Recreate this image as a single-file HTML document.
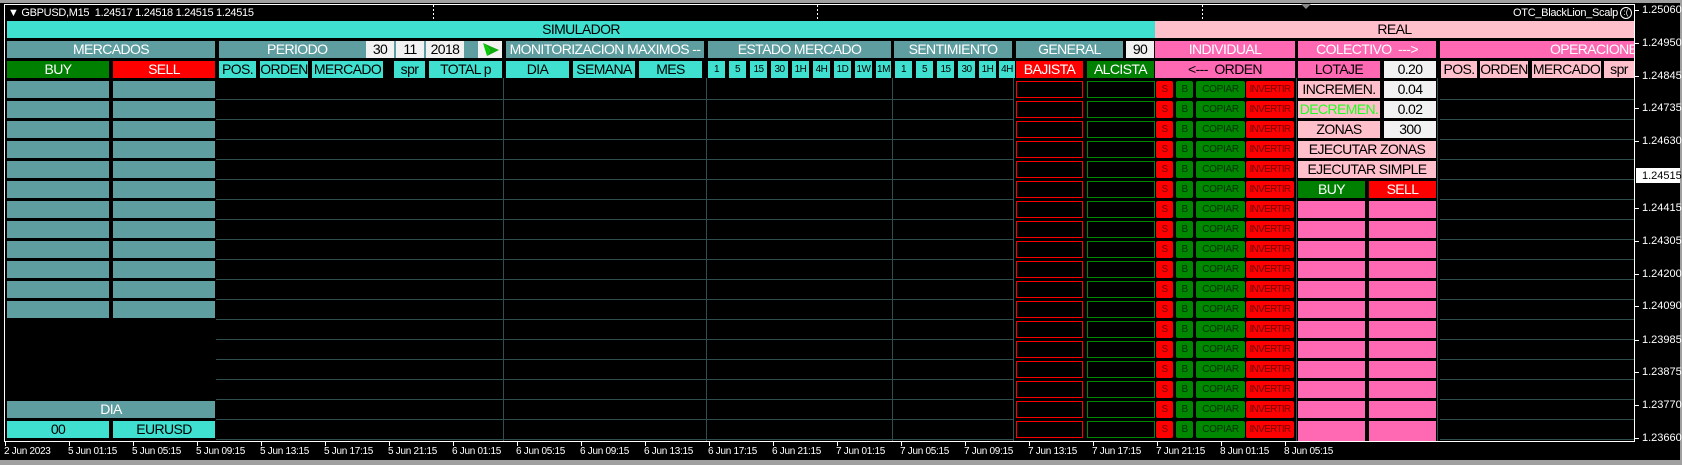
<!DOCTYPE html>
<html><head><meta charset="utf-8"><style>
*{margin:0;padding:0;box-sizing:border-box}
body{width:1682px;height:465px;background:#000;position:relative;overflow:hidden;font-family:"Liberation Sans",Arial,sans-serif}
div{position:absolute}
.b{height:17px;line-height:17px;text-align:center;font-size:14px;white-space:nowrap;overflow:hidden;letter-spacing:-0.6px}
.cb{background:#5f9ea0;color:#fff}
.tq{background:#40e0d0;color:#000}
.gn{background:#008000;color:#fff}
.rd{background:#ff0000;color:#fff}
.pk{background:#ffc0cb;color:#000}
.hp{background:#ff69b4;color:#fff}
.wh{background:#f2f2f2;color:#000}
.sm{font-size:10px;width:17px;letter-spacing:-0.5px}
.ro{border:1px solid #f00;width:67px;left:1016px}
.go{border:1px solid #080;width:68px;left:1087px}
.s{left:1156px;width:17px;background:#f00;color:#700;font-size:10px;border-radius:2px}
.bb{left:1176px;width:17px;background:#080;color:#030;font-size:10px;border-radius:2px}
.c{left:1196px;width:49px;background:#080;color:#030;font-size:10px;border-radius:2px;letter-spacing:-0.3px}
.i{left:1246px;width:48px;background:#f00;color:#700;font-size:10px;border-radius:2px;letter-spacing:-0.7px}
.g1{left:7px;width:102px}.g2{left:113px;width:102px}
.h1{left:1298px;width:67px}.h2{left:1369px;width:67px}
.vl{width:1px;background:#2f4f4f;top:78px;height:363px}
.pl{left:1642px;color:#fff;font-size:11px;line-height:12px}
.tk{left:1635px;width:4px;height:1px;background:#fff}
.xl{top:446px;color:#fff;font-size:10px;line-height:12px;white-space:nowrap;letter-spacing:-0.3px}
.xt{top:442px;width:1px;height:4px;background:#fff}
.dash{width:1px;top:5px;height:14px;background:repeating-linear-gradient(#fff 0 2px,transparent 2px 4px)}
</style></head><body>
<div style="left:0;top:0;width:1682px;height:3px;background:#a0a0a0"></div>
<div style="left:4px;top:4px;width:1631px;height:438px;border:1px solid #fff"></div>
<div style="left:1680px;top:3px;width:2px;height:462px;background:#a0a0a0"></div>
<div style="left:0;top:460px;width:1682px;height:5px;background:#a0a0a0"></div>
<div class="dash" style="left:433px"></div><div class="dash" style="left:817px"></div><div class="dash" style="left:1202px"></div>
<div style="left:1301px;top:4px;width:0;height:0;border-left:5px solid transparent;border-right:5px solid transparent;border-top:5px solid #888"></div>
<div style="left:8px;top:7px;color:#fff;font-size:11px;line-height:12px;white-space:nowrap;letter-spacing:-0.3px">&#9660; GBPUSD,M15&nbsp; 1.24517 1.24518 1.24515 1.24515</div>
<div style="left:1500px;top:7px;color:#fff;font-size:11px;line-height:12px;white-space:nowrap;width:118px;text-align:right;letter-spacing:-0.3px">OTC_BlackLion_Scalp</div>
<div style="left:1620px;top:7px;width:12px;height:12px;border:1px solid #fff;border-radius:50%;color:#fff;font-size:8px;line-height:10px;text-align:center">:(</div>

<!-- grid -->
<div style="left:216px;top:99px;width:797px;height:342px;background:repeating-linear-gradient(#2f4f4f 0 1px,transparent 1px 20px)"></div>
<div style="left:1440px;top:99px;width:194px;height:342px;background:repeating-linear-gradient(#2f4f4f 0 1px,transparent 1px 20px)"></div>
<div class="vl" style="left:503px"></div><div class="vl" style="left:706px"></div><div class="vl" style="left:892px"></div><div class="vl" style="left:1013px"></div><div class="vl" style="left:1296px"></div><div class="vl" style="left:1437px"></div>

<!-- row 0 -->
<div class="b tq" style="left:7px;top:21px;width:1148px">SIMULADOR</div>
<div class="b pk" style="left:1155px;top:21px;width:479px">REAL</div>
<!-- row 1 -->
<div class="b cb" style="left:7px;top:41px;width:208px">MERCADOS</div>
<div class="b cb" style="left:219px;top:41px;width:259px;text-align:left;padding-left:48px">PERIODO</div>
<div class="b wh" style="left:366px;top:41px;width:28px">30</div>
<div class="b wh" style="left:396px;top:41px;width:28px">11</div>
<div class="b wh" style="left:426px;top:41px;width:38px">2018</div>
<div class="b wh" style="left:478px;top:41px;width:24px"><svg width="24" height="17"><path d="M5 2 L21 9 L9 15 L12 9 Z" fill="#1a1"/><path d="M5 2 L12 9 L9 15" fill="#0c0"/></svg></div>
<div class="b cb" style="left:506px;top:41px;width:198px">MONITORIZACION MAXIMOS --</div>
<div class="b cb" style="left:708px;top:41px;width:183px">ESTADO MERCADO</div>
<div class="b cb" style="left:894px;top:41px;width:118px">SENTIMIENTO</div>
<div class="b cb" style="left:1016px;top:41px;width:107px">GENERAL</div>
<div class="b wh" style="left:1126px;top:41px;width:28px">90</div>
<div class="b hp" style="left:1155px;top:41px;width:140px">INDIVIDUAL</div>
<div class="b hp" style="left:1298px;top:41px;width:138px">COLECTIVO&nbsp; ---&gt;</div>
<div class="b hp" style="left:1440px;top:41px;width:194px;text-align:left;padding-left:110px">OPERACIONES</div>
<!-- row 2 -->
<div class="b gn" style="left:7px;top:61px;width:102px">BUY</div>
<div class="b rd" style="left:113px;top:61px;width:102px">SELL</div>
<div class="b tq" style="left:219px;top:61px;width:37px">POS.</div>
<div class="b tq" style="left:260px;top:61px;width:48px">ORDEN</div>
<div class="b tq" style="left:312px;top:61px;width:71px">MERCADO</div>
<div class="b tq" style="left:394px;top:61px;width:31px">spr</div>
<div class="b tq" style="left:429px;top:61px;width:73px">TOTAL p</div>
<div class="b tq" style="left:506px;top:61px;width:63px">DIA</div>
<div class="b tq" style="left:573px;top:61px;width:62px">SEMANA</div>
<div class="b tq" style="left:639px;top:61px;width:63px">MES</div>
<div class="b tq sm" style="left:708px;top:61px">1</div><div class="b tq sm" style="left:729px;top:61px">5</div><div class="b tq sm" style="left:750px;top:61px">15</div><div class="b tq sm" style="left:771px;top:61px">30</div><div class="b tq sm" style="left:792px;top:61px">1H</div><div class="b tq sm" style="left:813px;top:61px">4H</div><div class="b tq sm" style="left:834px;top:61px">1D</div><div class="b tq sm" style="left:855px;top:61px">1W</div><div class="b tq sm" style="left:876px;top:61px;width:15px">1M</div>
<div class="b tq sm" style="left:895px;top:61px">1</div><div class="b tq sm" style="left:916px;top:61px">5</div><div class="b tq sm" style="left:937px;top:61px">15</div><div class="b tq sm" style="left:958px;top:61px">30</div><div class="b tq sm" style="left:979px;top:61px">1H</div><div class="b tq sm" style="left:999px;top:61px;width:16px">4H</div>
<div class="b rd" style="left:1016px;top:61px;width:67px">BAJISTA</div>
<div class="b gn" style="left:1087px;top:61px;width:67px">ALCISTA</div>
<div class="b hp" style="left:1155px;top:61px;width:140px;color:#000">&lt;---&nbsp; ORDEN</div>
<div class="b hp" style="left:1298px;top:61px;width:82px;color:#000">LOTAJE</div>
<div class="b wh" style="left:1384px;top:61px;width:52px">0.20</div>
<div class="b pk" style="left:1441px;top:61px;width:36px">POS.</div>
<div class="b pk" style="left:1480px;top:61px;width:48px">ORDEN</div>
<div class="b pk" style="left:1532px;top:61px;width:69px">MERCADO</div>
<div class="b pk" style="left:1604px;top:61px;width:30px">spr</div>

<!-- left column rows -->
<div class="b cb g1" style="top:81px"></div><div class="b cb g2" style="top:81px"></div>
<div class="b cb g1" style="top:101px"></div><div class="b cb g2" style="top:101px"></div>
<div class="b cb g1" style="top:121px"></div><div class="b cb g2" style="top:121px"></div>
<div class="b cb g1" style="top:141px"></div><div class="b cb g2" style="top:141px"></div>
<div class="b cb g1" style="top:161px"></div><div class="b cb g2" style="top:161px"></div>
<div class="b cb g1" style="top:181px"></div><div class="b cb g2" style="top:181px"></div>
<div class="b cb g1" style="top:201px"></div><div class="b cb g2" style="top:201px"></div>
<div class="b cb g1" style="top:221px"></div><div class="b cb g2" style="top:221px"></div>
<div class="b cb g1" style="top:241px"></div><div class="b cb g2" style="top:241px"></div>
<div class="b cb g1" style="top:261px"></div><div class="b cb g2" style="top:261px"></div>
<div class="b cb g1" style="top:281px"></div><div class="b cb g2" style="top:281px"></div>
<div class="b cb g1" style="top:301px"></div><div class="b cb g2" style="top:301px"></div>
<div class="b cb" style="left:7px;top:401px;width:208px">DIA</div>
<div class="b tq g1" style="top:421px">00</div><div class="b tq g2" style="top:421px">EURUSD</div>

<!-- general outlines + individual buttons -->
<div class="b ro" style="top:81px"></div><div class="b go" style="top:81px"></div><div class="b s" style="top:81px">S</div><div class="b bb" style="top:81px">B</div><div class="b c" style="top:81px">COPIAR</div><div class="b i" style="top:81px">INVERTIR</div>
<div class="b ro" style="top:101px"></div><div class="b go" style="top:101px"></div><div class="b s" style="top:101px">S</div><div class="b bb" style="top:101px">B</div><div class="b c" style="top:101px">COPIAR</div><div class="b i" style="top:101px">INVERTIR</div>
<div class="b ro" style="top:121px"></div><div class="b go" style="top:121px"></div><div class="b s" style="top:121px">S</div><div class="b bb" style="top:121px">B</div><div class="b c" style="top:121px">COPIAR</div><div class="b i" style="top:121px">INVERTIR</div>
<div class="b ro" style="top:141px"></div><div class="b go" style="top:141px"></div><div class="b s" style="top:141px">S</div><div class="b bb" style="top:141px">B</div><div class="b c" style="top:141px">COPIAR</div><div class="b i" style="top:141px">INVERTIR</div>
<div class="b ro" style="top:161px"></div><div class="b go" style="top:161px"></div><div class="b s" style="top:161px">S</div><div class="b bb" style="top:161px">B</div><div class="b c" style="top:161px">COPIAR</div><div class="b i" style="top:161px">INVERTIR</div>
<div class="b ro" style="top:181px"></div><div class="b go" style="top:181px"></div><div class="b s" style="top:181px">S</div><div class="b bb" style="top:181px">B</div><div class="b c" style="top:181px">COPIAR</div><div class="b i" style="top:181px">INVERTIR</div>
<div class="b ro" style="top:201px"></div><div class="b go" style="top:201px"></div><div class="b s" style="top:201px">S</div><div class="b bb" style="top:201px">B</div><div class="b c" style="top:201px">COPIAR</div><div class="b i" style="top:201px">INVERTIR</div>
<div class="b ro" style="top:221px"></div><div class="b go" style="top:221px"></div><div class="b s" style="top:221px">S</div><div class="b bb" style="top:221px">B</div><div class="b c" style="top:221px">COPIAR</div><div class="b i" style="top:221px">INVERTIR</div>
<div class="b ro" style="top:241px"></div><div class="b go" style="top:241px"></div><div class="b s" style="top:241px">S</div><div class="b bb" style="top:241px">B</div><div class="b c" style="top:241px">COPIAR</div><div class="b i" style="top:241px">INVERTIR</div>
<div class="b ro" style="top:261px"></div><div class="b go" style="top:261px"></div><div class="b s" style="top:261px">S</div><div class="b bb" style="top:261px">B</div><div class="b c" style="top:261px">COPIAR</div><div class="b i" style="top:261px">INVERTIR</div>
<div class="b ro" style="top:281px"></div><div class="b go" style="top:281px"></div><div class="b s" style="top:281px">S</div><div class="b bb" style="top:281px">B</div><div class="b c" style="top:281px">COPIAR</div><div class="b i" style="top:281px">INVERTIR</div>
<div class="b ro" style="top:301px"></div><div class="b go" style="top:301px"></div><div class="b s" style="top:301px">S</div><div class="b bb" style="top:301px">B</div><div class="b c" style="top:301px">COPIAR</div><div class="b i" style="top:301px">INVERTIR</div>
<div class="b ro" style="top:321px"></div><div class="b go" style="top:321px"></div><div class="b s" style="top:321px">S</div><div class="b bb" style="top:321px">B</div><div class="b c" style="top:321px">COPIAR</div><div class="b i" style="top:321px">INVERTIR</div>
<div class="b ro" style="top:341px"></div><div class="b go" style="top:341px"></div><div class="b s" style="top:341px">S</div><div class="b bb" style="top:341px">B</div><div class="b c" style="top:341px">COPIAR</div><div class="b i" style="top:341px">INVERTIR</div>
<div class="b ro" style="top:361px"></div><div class="b go" style="top:361px"></div><div class="b s" style="top:361px">S</div><div class="b bb" style="top:361px">B</div><div class="b c" style="top:361px">COPIAR</div><div class="b i" style="top:361px">INVERTIR</div>
<div class="b ro" style="top:381px"></div><div class="b go" style="top:381px"></div><div class="b s" style="top:381px">S</div><div class="b bb" style="top:381px">B</div><div class="b c" style="top:381px">COPIAR</div><div class="b i" style="top:381px">INVERTIR</div>
<div class="b ro" style="top:401px"></div><div class="b go" style="top:401px"></div><div class="b s" style="top:401px">S</div><div class="b bb" style="top:401px">B</div><div class="b c" style="top:401px">COPIAR</div><div class="b i" style="top:401px">INVERTIR</div>
<div class="b ro" style="top:421px"></div><div class="b go" style="top:421px"></div><div class="b s" style="top:421px">S</div><div class="b bb" style="top:421px">B</div><div class="b c" style="top:421px">COPIAR</div><div class="b i" style="top:421px">INVERTIR</div>

<!-- colectivo -->
<div class="b pk" style="left:1298px;top:81px;width:82px">INCREMEN.</div><div class="b wh" style="left:1384px;top:81px;width:52px">0.04</div>
<div class="b pk" style="left:1298px;top:101px;width:82px;color:#2f2">DECREMEN.</div><div class="b wh" style="left:1384px;top:101px;width:52px">0.02</div>
<div class="b pk" style="left:1298px;top:121px;width:82px">ZONAS</div><div class="b wh" style="left:1384px;top:121px;width:52px">300</div>
<div class="b pk" style="left:1298px;top:141px;width:138px">EJECUTAR ZONAS</div>
<div class="b pk" style="left:1298px;top:161px;width:138px">EJECUTAR SIMPLE</div>
<div class="b gn h1" style="top:181px">BUY</div><div class="b rd h2" style="top:181px">SELL</div>
<div class="b hp h1" style="top:201px"></div><div class="b hp h2" style="top:201px"></div>
<div class="b hp h1" style="top:221px"></div><div class="b hp h2" style="top:221px"></div>
<div class="b hp h1" style="top:241px"></div><div class="b hp h2" style="top:241px"></div>
<div class="b hp h1" style="top:261px"></div><div class="b hp h2" style="top:261px"></div>
<div class="b hp h1" style="top:281px"></div><div class="b hp h2" style="top:281px"></div>
<div class="b hp h1" style="top:301px"></div><div class="b hp h2" style="top:301px"></div>
<div class="b hp h1" style="top:321px"></div><div class="b hp h2" style="top:321px"></div>
<div class="b hp h1" style="top:341px"></div><div class="b hp h2" style="top:341px"></div>
<div class="b hp h1" style="top:361px"></div><div class="b hp h2" style="top:361px"></div>
<div class="b hp h1" style="top:381px"></div><div class="b hp h2" style="top:381px"></div>
<div class="b hp h1" style="top:401px"></div><div class="b hp h2" style="top:401px"></div>
<div class="b hp h1" style="top:421px;height:20px"></div><div class="b hp h2" style="top:421px;height:20px"></div>

<!-- price axis -->
<div class="tk" style="top:10px"></div><div class="pl" style="top:4px">1.25060</div>
<div class="tk" style="top:43px"></div><div class="pl" style="top:37px">1.24950</div>
<div class="tk" style="top:76px"></div><div class="pl" style="top:70px">1.24845</div>
<div class="tk" style="top:108px"></div><div class="pl" style="top:102px">1.24735</div>
<div class="tk" style="top:141px"></div><div class="pl" style="top:135px">1.24630</div>
<div style="left:1636px;top:168px;width:44px;height:15px;background:#fff"></div><div class="pl" style="top:170px;color:#000">1.24515</div>
<div class="tk" style="top:208px"></div><div class="pl" style="top:202px">1.24415</div>
<div class="tk" style="top:241px"></div><div class="pl" style="top:235px">1.24305</div>
<div class="tk" style="top:274px"></div><div class="pl" style="top:268px">1.24200</div>
<div class="tk" style="top:306px"></div><div class="pl" style="top:300px">1.24090</div>
<div class="tk" style="top:340px"></div><div class="pl" style="top:334px">1.23985</div>
<div class="tk" style="top:372px"></div><div class="pl" style="top:366px">1.23875</div>
<div class="tk" style="top:405px"></div><div class="pl" style="top:399px">1.23770</div>
<div class="tk" style="top:438px"></div><div class="pl" style="top:432px">1.23660</div>

<!-- time axis -->
<div class="xt" style="left:5px"></div><div class="xl" style="left:4px">2 Jun 2023</div>
<div class="xt" style="left:69px"></div><div class="xl" style="left:68px">5 Jun 01:15</div>
<div class="xt" style="left:133px"></div><div class="xl" style="left:132px">5 Jun 05:15</div>
<div class="xt" style="left:197px"></div><div class="xl" style="left:196px">5 Jun 09:15</div>
<div class="xt" style="left:261px"></div><div class="xl" style="left:260px">5 Jun 13:15</div>
<div class="xt" style="left:325px"></div><div class="xl" style="left:324px">5 Jun 17:15</div>
<div class="xt" style="left:389px"></div><div class="xl" style="left:388px">5 Jun 21:15</div>
<div class="xt" style="left:453px"></div><div class="xl" style="left:452px">6 Jun 01:15</div>
<div class="xt" style="left:517px"></div><div class="xl" style="left:516px">6 Jun 05:15</div>
<div class="xt" style="left:581px"></div><div class="xl" style="left:580px">6 Jun 09:15</div>
<div class="xt" style="left:645px"></div><div class="xl" style="left:644px">6 Jun 13:15</div>
<div class="xt" style="left:709px"></div><div class="xl" style="left:708px">6 Jun 17:15</div>
<div class="xt" style="left:773px"></div><div class="xl" style="left:772px">6 Jun 21:15</div>
<div class="xt" style="left:837px"></div><div class="xl" style="left:836px">7 Jun 01:15</div>
<div class="xt" style="left:901px"></div><div class="xl" style="left:900px">7 Jun 05:15</div>
<div class="xt" style="left:965px"></div><div class="xl" style="left:964px">7 Jun 09:15</div>
<div class="xt" style="left:1029px"></div><div class="xl" style="left:1028px">7 Jun 13:15</div>
<div class="xt" style="left:1093px"></div><div class="xl" style="left:1092px">7 Jun 17:15</div>
<div class="xt" style="left:1157px"></div><div class="xl" style="left:1156px">7 Jun 21:15</div>
<div class="xt" style="left:1221px"></div><div class="xl" style="left:1220px">8 Jun 01:15</div>
<div class="xt" style="left:1285px"></div><div class="xl" style="left:1284px">8 Jun 05:15</div>
</body></html>
